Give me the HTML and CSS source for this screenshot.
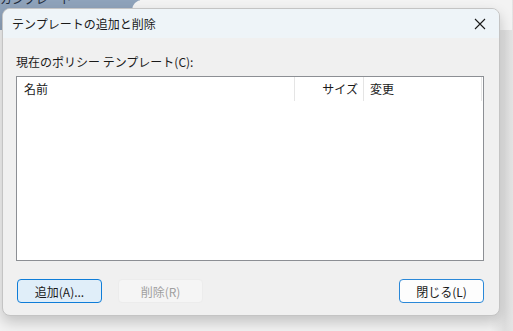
FILE: index.html
```html
<!DOCTYPE html>
<html lang="ja">
<head>
    <meta charset="UTF-8">
    <title>テンプレートの追加と削除</title>
    <link rel="stylesheet" href="styles.css">
</head>
<body>
    <div class="desktop">
        <div class="back-window">
            <div class="back-title">カンプレート</div>
        </div>
        <div class="back-tab"></div>

        <div class="dialog">
            <div class="titlebar">
                <span class="title">テンプレートの追加と削除</span>
                <svg class="close" width="12" height="12" viewBox="0 0 12 12">
                    <path d="M1 1 L11 11 M11 1 L1 11" stroke="#1a1a1a" stroke-width="1.1" fill="none"/>
                </svg>
            </div>
            <div class="content">
                <div class="list-label">現在のポリシー テンプレート(C):</div>
                <div class="listbox">
                    <div class="list-header">
                        <div class="col col-name">名前</div>
                        <div class="col col-size">サイズ</div>
                        <div class="col col-date">変更</div>
                        <div class="col col-rest"></div>
                    </div>
                </div>
                <div class="buttons">
                    <button class="btn btn-default">追加(A)...</button>
                    <button class="btn btn-disabled" disabled>削除(R)</button>
                    <span class="spacer"></span>
                    <button class="btn btn-close">閉じる(L)</button>
                </div>
            </div>
        </div>
    </div>
</body>
</html>
```

FILE: styles.css
```css
body {
    margin: 0;
    font-family: "Noto Sans CJK JP", "Noto Sans", sans-serif;
    font-size: 12px;
    color: #1a1a1a;
}

.desktop {
    position: relative;
    width: 513px;
    height: 331px;
    overflow: hidden;
    background: linear-gradient(to right, #f2f2f2 0, #f2f2f2 490px, #dedede 505px, #e4e4e4 513px);
}

.back-window {
    position: absolute;
    left: 0;
    top: -10px;
    width: 140px;
    height: 40px;
    background: #8fa3bb;
}

.back-title {
    position: absolute;
    left: 0;
    top: 2px;
    font-size: 12px;
    line-height: 14px;
    color: #1e2a3a;
}

.back-tab {
    position: absolute;
    left: 132px;
    top: 0;
    width: 380px;
    height: 30px;
    background: #f3f3f3;
    border-radius: 10px 0 0 0;
}

.dialog {
    position: absolute;
    left: 2px;
    top: 8px;
    width: 498px;
    height: 308px;
    background: #f0f0f0;
    border: 1px solid #c4c4c4;
    border-radius: 8px;
    box-sizing: border-box;
    overflow: hidden;
    box-shadow: 0 6px 14px rgba(0, 0, 0, 0.2);
    display: flex;
    flex-direction: column;
}

.titlebar {
    height: 29px;
    background: #eef4f8;
    display: flex;
    align-items: center;
    padding: 0 13px 0 9px;
    flex-shrink: 0;
}

.title {
    flex: 1;
    font-size: 12px;
}

.close {
    display: block;
}

.content {
    padding: 16px 15px 0 13px;
    display: flex;
    flex-direction: column;
}

.list-label {
    line-height: 16px;
    margin-bottom: 6px;
}

.listbox {
    height: 185px;
    background: #ffffff;
    border: 1px solid #8c8f94;
    box-sizing: border-box;
}

.list-header {
    display: flex;
    height: 26px;
}

.col {
    display: flex;
    align-items: center;
    height: 24px;
    box-sizing: border-box;
    padding-bottom: 2px;
}

.col-name {
    width: 278px;
    padding-left: 7px;
    border-right: 1px solid #e5e5e5;
}

.col-size {
    width: 69px;
    justify-content: flex-end;
    padding-right: 5px;
    border-right: 1px solid #e5e5e5;
}

.col-date {
    width: 118px;
    padding-left: 6px;
    border-right: 1px solid #e5e5e5;
}

.col-rest {
    flex: 1;
}

.buttons {
    display: flex;
    margin-top: 18px;
    padding-left: 1px;
}

.spacer {
    flex: 1;
}

.btn {
    font-family: inherit;
    font-size: 12px;
    width: 85px;
    height: 24px;
    border-radius: 4px;
    padding: 0;
    box-sizing: border-box;
}

.btn-default {
    background: #e0eef9;
    border: 1px solid #0f7dd8;
    color: #1a1a1a;
}

.btn-disabled {
    margin-left: 16px;
    background: #f5f5f5;
    border: 1px solid #ececec;
    color: #a0a0a0;
}

.btn-close {
    background: #fdfdfd;
    border: 1px solid #2a88d8;
    color: #1a1a1a;
}
```
